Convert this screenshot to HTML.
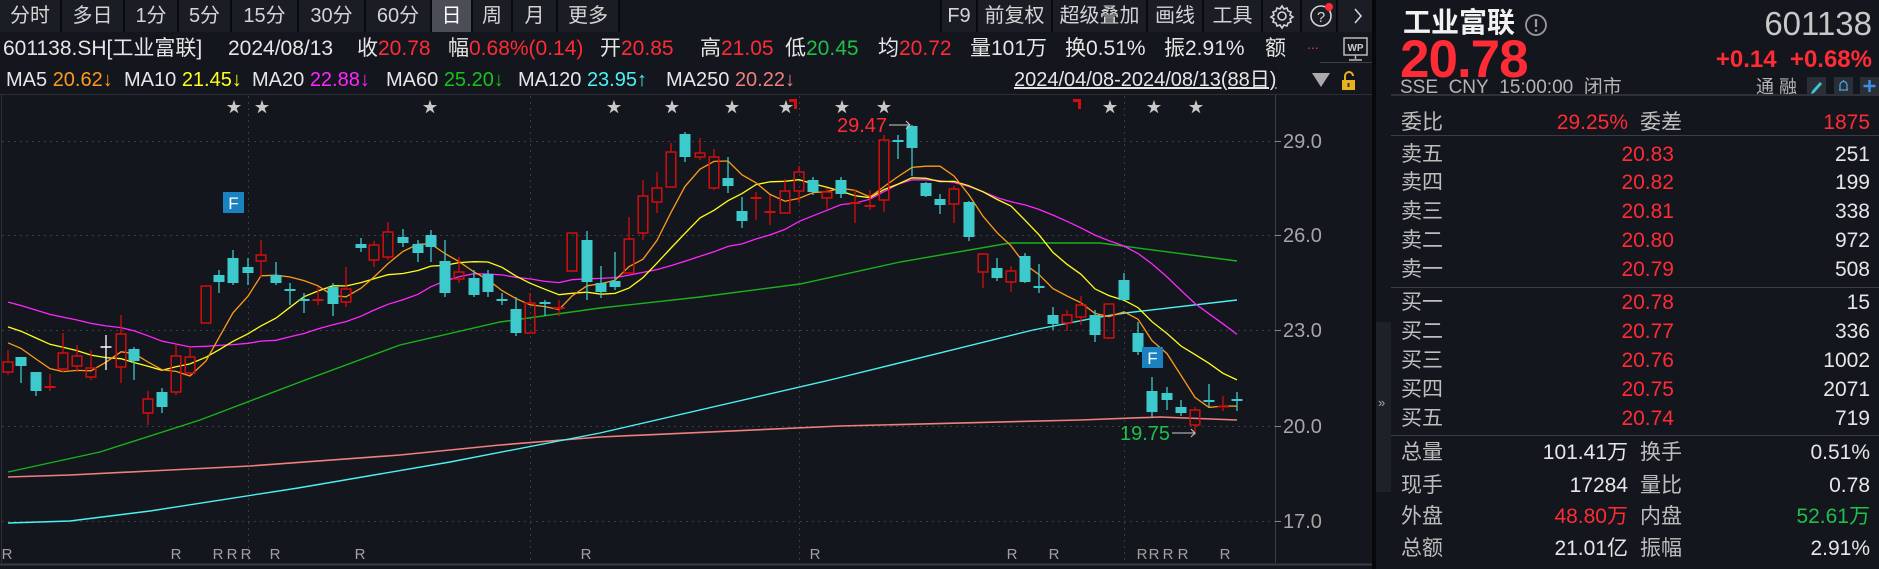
<!DOCTYPE html>
<html><head><meta charset="utf-8">
<style>
*{margin:0;padding:0;box-sizing:border-box}
body{width:1879px;height:569px;background:#13161c;overflow:hidden;position:relative;font-family:"Liberation Sans","Noto Sans CJK SC",sans-serif;color:#d8d8d8}
.a{position:absolute;white-space:nowrap}
.t{font-size:21px;line-height:24px}
.m{font-size:20px;line-height:22px}
.r{color:#ff2b35}.g{color:#1fbf4a}.w{color:#e6e6e6}.gy{color:#b4b4b4}
.tab{position:absolute;top:0;height:32px;line-height:32px;font-size:20px;text-align:center;color:#d4d4d4;background:#1a1d24;border-right:2px solid #0a0b0e}
.rp{font-size:21px;line-height:24px}
.lab{color:#bdbdbd}
.rv{text-align:right}
</style></head><body>

<div class="tab" style="left:0;width:62px">分时</div>
<div class="tab" style="left:62px;width:63px">多日</div>
<div class="tab" style="left:125px;width:54px">1分</div>
<div class="tab" style="left:179px;width:53px">5分</div>
<div class="tab" style="left:232px;width:67px">15分</div>
<div class="tab" style="left:299px;width:67px">30分</div>
<div class="tab" style="left:366px;width:66px">60分</div>
<div class="tab" style="left:432px;width:41px;background:#4b4e57;color:#fff">日</div>
<div class="tab" style="left:473px;width:40px">周</div>
<div class="tab" style="left:513px;width:45px">月</div>
<div class="tab" style="left:558px;width:62px">更多</div>
<div class="tab" style="left:940px;width:38px;border-left:2px solid #0a0b0e">F9</div>
<div class="tab" style="left:978px;width:75px">前复权</div>
<div class="tab" style="left:1053px;width:95px">超级叠加</div>
<div class="tab" style="left:1148px;width:56px">画线</div>
<div class="tab" style="left:1204px;width:59px">工具</div>
<div class="tab" style="left:1263px;width:39px"></div>
<div class="tab" style="left:1302px;width:36px"></div>
<div class="tab" style="left:1338px;width:37px;border-right:none"></div>
<svg class="a" style="left:1263px;top:0" width="112" height="32" viewBox="0 0 112 32">
 <g fill="none" stroke="#d4d4d4" stroke-width="1.6">
  <circle cx="19" cy="16" r="4"/>
  <path d="M19 6l2 3 3-1 1 3 3 1-1 3 3 2-3 2 1 3-3 1-1 3-3-1-2 3-2-3-3 1-1-3-3-1 1-3-3-2 3-2-1-3 3-1 1-3 3 1z"/>
  <circle cx="58" cy="16" r="10"/>
 </g>
 <text x="58" y="22" font-size="15" fill="#d4d4d4" text-anchor="middle" font-family="Liberation Sans">?</text>
 <circle cx="66" cy="7" r="4" fill="#ff2b35"/>
 <path d="M92 9l6 7-6 7" fill="none" stroke="#d4d4d4" stroke-width="1.6"/>
</svg>

<div class="a t w" style="left:3px;top:37px">601138.SH[工业富联]</div>
<div class="a t w" style="left:228px;top:37px">2024/08/13</div>
<div class="a t w" style="left:357px;top:37px">收<span class="r">20.78</span></div>
<div class="a t w" style="left:448px;top:37px">幅<span class="r">0.68%(0.14)</span></div>
<div class="a t w" style="left:600px;top:37px">开<span class="r">20.85</span></div>
<div class="a t w" style="left:700px;top:37px">高<span class="r">21.05</span></div>
<div class="a t w" style="left:785px;top:37px">低<span class="g">20.45</span></div>
<div class="a t w" style="left:878px;top:37px">均<span class="r">20.72</span></div>
<div class="a t w" style="left:970px;top:37px">量101万</div>
<div class="a t w" style="left:1065px;top:37px">换0.51%</div>
<div class="a t w" style="left:1164px;top:37px">振2.91%</div>
<div class="a t w" style="left:1265px;top:37px">额</div>
<div class="a r" style="left:1307px;top:36px;font-size:14px">...</div>
<svg class="a" style="left:1342px;top:37px" width="28" height="26"><rect x="2" y="1" width="23" height="17" fill="none" stroke="#bbb" stroke-width="1.5"/><text x="13.5" y="14" font-size="10" font-weight="bold" fill="#ccc" text-anchor="middle" font-family="Liberation Sans">WP</text><path d="M13.5 18v4M7 23h13" stroke="#bbb" stroke-width="1.5"/></svg>
<div class="a" style="left:1320px;top:62px;width:52px;height:1px;background:#3a3d44"></div>

<div class="a m w" style="left:6px;top:69px">MA5 <span style="color:#ff9a1a">20.62↓</span></div>
<div class="a m w" style="left:124px;top:69px">MA10 <span style="color:#ffff1a">21.45↓</span></div>
<div class="a m w" style="left:252px;top:69px">MA20 <span style="color:#ff26ff">22.88↓</span></div>
<div class="a m w" style="left:386px;top:69px">MA60 <span style="color:#19c21c">25.20↓</span></div>
<div class="a m w" style="left:518px;top:69px">MA120 <span style="color:#4cf2f2">23.95↑</span></div>
<div class="a m w" style="left:666px;top:69px">MA250 <span style="color:#f07f7f">20.22↓</span></div>
<div class="a m w" style="left:1014px;top:69px;text-decoration:underline">2024/04/08-2024/08/13(88日)</div>
<svg class="a" style="left:1311px;top:70px" width="50" height="22"><path d="M1 3h18l-9 14z" fill="#aaa"/><rect x="31" y="10" width="13" height="10" fill="#e8b21a"/><path d="M34 10V6a4 4 0 0 1 8 0" fill="none" stroke="#e8b21a" stroke-width="2"/><rect x="36.5" y="13" width="2" height="4" fill="#333"/></svg>

<svg id="ch" class="a" style="left:0;top:0" width="1376" height="569"></svg>

<div class="a" style="left:1372px;top:0;width:4px;height:569px;background:#07080a"></div>
<div class="a" style="left:1376px;top:322px;width:15px;height:170px;background:#1e2128"></div>
<div class="a" style="left:1378px;top:395px;font-size:13px;color:#aaa">»</div>
<div class="a" style="left:1403px;top:7px;font-size:28px;font-weight:bold;color:#f2f2f2;line-height:32px">工业富联</div>
<svg class="a" style="left:1524px;top:13px" width="26" height="26"><circle cx="12" cy="12" r="10" fill="none" stroke="#999" stroke-width="1.8"/><path d="M12 6v8" stroke="#999" stroke-width="2.2"/><circle cx="12" cy="17.5" r="1.3" fill="#999"/></svg>
<div class="a" style="left:1760px;top:6px;width:112px;text-align:right;font-size:33px;color:#c8c8c8;line-height:36px">601138</div>
<div class="a r" style="left:1400px;top:32px;font-size:53px;font-weight:bold;line-height:56px;letter-spacing:-1px">20.78</div>
<div class="a r" style="left:1660px;top:46px;width:212px;text-align:right;font-size:24px;font-weight:bold;line-height:28px">+0.14&nbsp;&nbsp;+0.68%</div>
<div class="a gy" style="left:1400px;top:77px;font-size:19px;line-height:22px">SSE&nbsp; CNY&nbsp; 15:00:00&nbsp; 闭市</div>
<div class="a gy" style="left:1756px;top:76px;font-size:18px;line-height:22px">通&nbsp;融</div>
<svg class="a" style="left:1806px;top:76px" width="73" height="20"><rect x="1" y="1" width="19" height="18" fill="#2a2e36"/><path d="M6 15l8-9 2 2-8 9-3 1z" fill="#3cc8d8"/><rect x="28" y="1" width="19" height="18" fill="#2a2e36"/><path d="M33 14h9M34 14v-5a3.5 3.5 0 0 1 7 0v5M37.5 4v1" fill="none" stroke="#4aa0e0" stroke-width="1.3"/><rect x="54" y="1" width="19" height="18" fill="#2a2e36"/><path d="M63.5 4v12M57.5 10h12" stroke="#3a8fe8" stroke-width="2.5"/></svg>
<div class="a" style="left:1391px;top:94px;width:488px;height:2px;background:#2e3138"></div>

<div id="rp"></div>

<script>
var s=document.getElementById('ch'),h='';
function L(x1,y1,x2,y2,c,w,d){h+='<line x1="'+x1+'" y1="'+y1+'" x2="'+x2+'" y2="'+y2+'" stroke="'+c+'" stroke-width="'+(w||1)+'"'+(d?' stroke-dasharray="'+d+'"':'')+'/>';}
L(0,94.5,1372,94.5,'#2c2f36',1);
L(1275.5,95,1275.5,563,'#3a3d44',1);
L(0,564.5,1372,564.5,'#3a3d44',2);
L(1.5,95,1.5,563,'#2c2f36',1);
[141,235,330,426,521].forEach(function(y,i){L(2,y+.5,1275,y+.5,'#3a3d44',1,'2 4');L(1275,y+.5,1281,y+.5,'#888',1);
 h+='<text x="1283" y="'+(y+7)+'" font-size="20" fill="#a6a6a6" font-family="Liberation Sans">'+['29.0','26.0','23.0','20.0','17.0'][i]+'</text>';});
[248,530,799,1124].forEach(function(x){L(x+.5,96,x+.5,562,'#3a3d44',1,'2 4');});
function P(pts,c,w){h+='<polyline fill="none" stroke="'+c+'" stroke-width="'+(w||1.3)+'" points="'+pts.map(function(p){return p.join(',')}).join(' ')+'"/>';}
P([[8,477],[70,475],[150,471],[250,466],[400,455],[500,445],[600,437],[840,426],[1080,420],[1160,417],[1237,420]],'#f07f7f',1.6);
P([[8,523],[70,521],[150,511],[298,488],[450,462],[600,433],[830,380],[1033,330],[1100,317],[1125,313],[1237,300]],'#4cf2f2',1.4);
P([[8,472],[100,452],[200,420],[300,382],[400,345],[500,322],[600,308],[700,297],[800,284],[900,262],[1010,243],[1100,243],[1237,261]],'#19b21c',1.4);
var C=[[8,'r',362,372,350,375],[21,'c',357,366,357,383],[36,'c',372,391,372,396],[50,'r',386,388,374,391],[63,'r',353,369,333,372],[77,'r',356,366,345,372],[91,'r',368,377,350,380],[106,'w',346,348,335,370],[121,'r',334,367,315,383],[134,'c',349,361,347,380],[148,'r',399,413,391,425],[162,'c',392,407,388,413],[176,'r',356,392,343,395],[190,'r',357,373,347,375],[206,'r',286,323,286,323],[219,'c',275,282,270,293],[233,'c',258,283,250,285],[248,'c',267,273,258,285],[261,'r',255,261,240,277],[276,'c',275,283,262,285],[290,'c',289,291,283,305],[304,'c',299,301,293,313],[318,'r',299,301,287,305],[333,'c',287,304,283,316],[346,'r',289,302,267,307],[361,'c',244,248,238,252],[374,'r',245,260,241,267],[388,'r',232,257,222,260],[403,'c',237,243,229,247],[418,'c',244,253,240,262],[431,'c',235,247,230,262],[445,'c',261,293,240,297],[459,'r',272,279,257,283],[474,'c',278,295,270,297],[488,'c',274,292,270,297],[502,'c',299,301,293,305],[516,'c',309,333,297,336],[530,'r',303,333,293,333],[545,'c',302,304,300,316],[559,'r',307,309,300,316],[572,'r',233,271,233,271],[587,'c',240,282,231,300],[601,'c',283,292,266,298],[615,'c',281,287,252,290],[629,'r',239,273,217,273],[643,'r',196,233,180,240],[657,'r',188,202,172,213],[671,'r',152,187,143,187],[685,'c',134,157,132,162],[700,'r',153,157,138,160],[714,'r',157,188,149,190],[728,'c',178,186,157,193],[742,'c',211,221,197,228],[756,'r',197,199,192,220],[770,'r',211,213,195,225],[785,'r',191,213,179,213],[799,'r',172,191,166,203],[813,'c',180,192,177,195],[827,'r',192,198,188,209],[841,'c',180,194,177,198],[855,'r',202,204,190,223],[870,'r',205,207,190,210],[884,'r',140,200,135,212],[898,'c',140,142,135,159],[912,'c',126,148,125,176],[926,'c',183,196,182,197],[940,'c',199,205,194,214],[954,'r',189,204,186,223],[969,'c',202,237,201,241],[983,'r',254,272,253,288],[997,'c',268,278,258,281],[1011,'r',271,282,266,292],[1025,'c',256,282,253,283],[1039,'c',286,288,264,293],[1053,'c',315,324,307,330],[1067,'r',315,323,310,331],[1081,'r',305,317,296,325],[1095,'c',315,335,310,342],[1109,'r',304,338,304,339],[1124,'c',280,300,273,300],[1138,'c',333,352,322,355],[1152,'c',391,412,377,417],[1167,'c',393,400,387,410],[1181,'c',407,413,400,416],[1195,'r',410,425,407,435],[1209,'c',400,402,384,407],[1223,'r',405,408,396,411],[1237,'c',399,401,392,411]];
var cl=C.map(function(c){return c[1]=='r'?c[2]:c[3];});
function MA(n,pad,col){var pts=[];for(var i=0;i<cl.length;i++){var sum=0;for(var k=i-n+1;k<=i;k++)sum+=k<0?pad:cl[k];pts.push([C[i][0],(sum/n).toFixed(1)]);}P(pts,col,1.3);}
MA(20,299,'#ff26ff');MA(10,323,'#ffff1a');MA(5,338,'#ff9a1a');
C.forEach(function(c){var x=c[0],t=c[2],b=c[3];if(b-t<2){t=(t+b)/2-1;b=t+2;}
 if(c[1]=='c'){L(x,c[4],x,c[5],'#3ccacd',1.3);h+='<rect x="'+(x-5.5)+'" y="'+t+'" width="11" height="'+(b-t)+'" fill="#3ccacd"/>';}
 else if(c[1]=='w'){L(x,c[4],x,c[5],'#fff',1.3);L(x-5.5,(t+b)/2,x+5.5,(t+b)/2,'#fff',1.5);}
 else{L(x,c[4],x,t,'#d40e0e',1.3);L(x,b,x,c[5],'#d40e0e',1.3);
  if(b-t<=3)L(x-5.5,(t+b)/2,x+5.5,(t+b)/2,'#d40e0e',2);else h+='<rect x="'+(x-4.8)+'" y="'+t+'" width="9.6" height="'+(b-t)+'" fill="none" stroke="#d40e0e" stroke-width="1.5"/>';}});
[234,262,430,614,672,732,786,842,884,1110,1154,1196].forEach(function(x){h+='<text x="'+x+'" y="112" font-size="15" fill="#c8c8c8" text-anchor="middle">★</text>';});
[792,1076].forEach(function(x){h+='<path d="M'+(x-3)+' 99h8v10h-3v-7h-5z" fill="#d40e0e"/>';});
[7,176,218,232,246,275,360,586,815,1012,1054,1142,1154,1168,1183,1225].forEach(function(x){h+='<text x="'+x+'" y="559" font-size="15" fill="#a0a0a0" text-anchor="middle" font-family="Liberation Sans">R</text>';});
[[223,192],[1142,347]].forEach(function(p){h+='<rect x="'+p[0]+'" y="'+p[1]+'" width="21" height="21" fill="#1a82c0"/><text x="'+(p[0]+10.5)+'" y="'+(p[1]+17)+'" font-size="17" fill="#fff" text-anchor="middle" font-family="Liberation Sans">F</text>';});
h+='<text x="837" y="132" font-size="20" fill="#ff2b35" font-family="Liberation Sans">29.47</text>';
L(889,125,910,125,'#ccc',1);h+='<path d="M906 121l4 4-4 4" fill="none" stroke="#ccc"/>';
h+='<text x="1120" y="440" font-size="20" fill="#1fbf4a" font-family="Liberation Sans">19.75</text>';
L(1172,433,1195,433,'#ccc',1);h+='<path d="M1191 429l4 4-4 4" fill="none" stroke="#ccc"/>';
s.innerHTML=h;
var rp='';
function row(lab,y,v,vc,q){rp+='<div class="a rp lab" style="left:1401px;top:'+(y-12)+'px">'+lab+'</div><div class="a rp rv '+vc+'" style="left:1560px;width:114px;top:'+(y-12)+'px">'+v+'</div><div class="a rp rv w" style="left:1760px;width:110px;top:'+(y-12)+'px">'+q+'</div>';}
rp+='<div class="a rp lab" style="left:1401px;top:111px">委比</div><div class="a rp rv r" style="left:1520px;width:108px;top:111px">29.25%</div><div class="a rp lab" style="left:1640px;top:111px">委差</div><div class="a rp rv r" style="left:1760px;width:110px;top:111px">1875</div>';
rp+='<div class="a" style="left:1391px;top:135px;width:488px;height:1px;background:#3a3d44"></div>';
[['卖五',155,'20.83','251'],['卖四',183,'20.82','199'],['卖三',212,'20.81','338'],['卖二',241,'20.80','972'],['卖一',270,'20.79','508'],['买一',303,'20.78','15'],['买二',332,'20.77','336'],['买三',361,'20.76','1002'],['买四',390,'20.75','2071'],['买五',419,'20.74','719']].forEach(function(r){row(r[0],r[1],r[2],'r',r[3]);});
rp+='<div class="a" style="left:1391px;top:287px;width:488px;height:1px;background:#3a3d44"></div><div class="a" style="left:1391px;top:435px;width:488px;height:1px;background:#3a3d44"></div>';
[['总量',453,'101.41万','w','换手','0.51%','w'],['现手',486,'17284','w','量比','0.78','w'],['外盘',517,'48.80万','r','内盘','52.61万','g'],['总额',549,'21.01亿','w','振幅','2.91%','w']].forEach(function(r){
 rp+='<div class="a rp lab" style="left:1401px;top:'+(r[1]-12)+'px">'+r[0]+'</div><div class="a rp rv '+r[3]+'" style="left:1510px;width:118px;top:'+(r[1]-12)+'px">'+r[2]+'</div><div class="a rp lab" style="left:1640px;top:'+(r[1]-12)+'px">'+r[4]+'</div><div class="a rp rv '+r[6]+'" style="left:1750px;width:120px;top:'+(r[1]-12)+'px">'+r[5]+'</div>';});
document.getElementById('rp').innerHTML=rp;
</script>
</body></html>
